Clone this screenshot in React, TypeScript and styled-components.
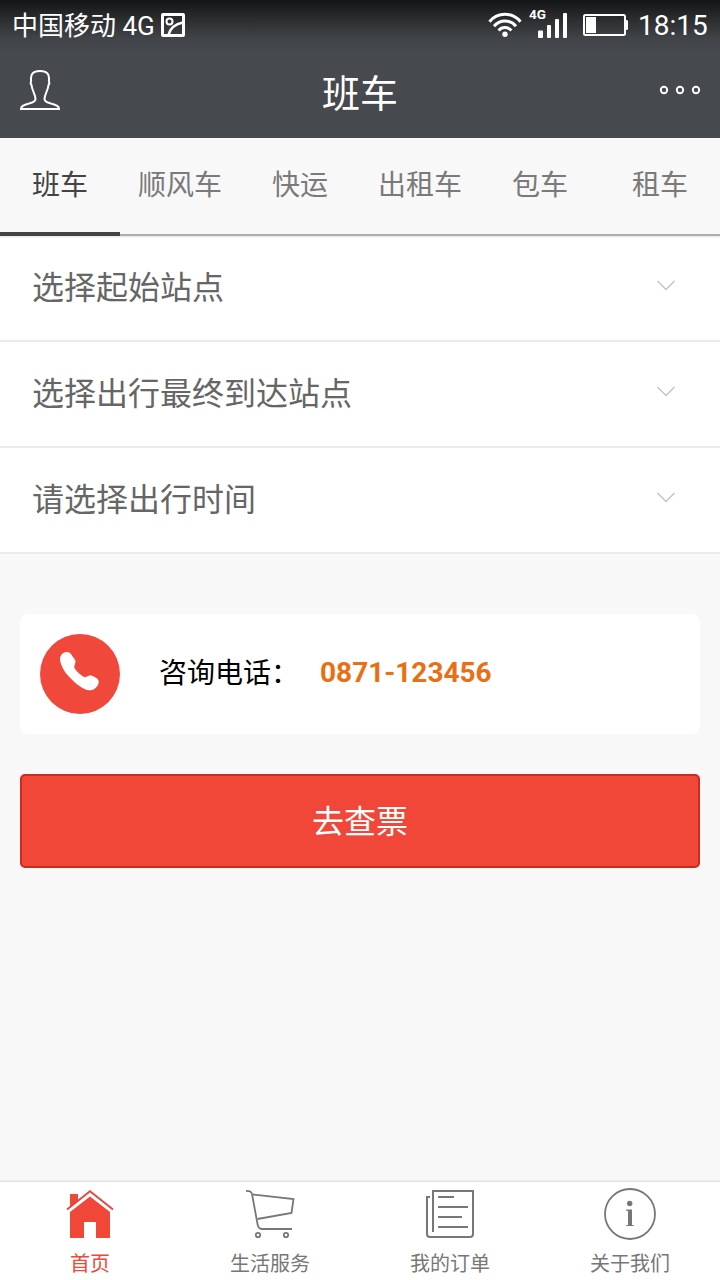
import React from 'react';
import styled, { createGlobalStyle } from 'styled-components';

const GlobalStyle = createGlobalStyle`
  * { box-sizing: border-box; }
  body { margin: 0; background: #f8f8f8; }
  button { font: inherit; }
`;

const Screen = styled.div`
  width: 720px;
  height: 1280px;
  display: flex;
  flex-direction: column;
  overflow: hidden;
  background: #f8f8f8;
  font-family: Roboto, 'Noto Sans CJK SC', sans-serif;
`;

const Header = styled.header`
  height: 138px;
  flex: none;
  color: #fff;
  background: linear-gradient(#141516 0, #2c2e30 20px, #404347 38px, #46494d 52px);
`;

const StatusBar = styled.div`
  height: 50px;
  display: flex;
  align-items: center;
  padding: 0 12px 0 12px;
`;

const Carrier = styled.span`
  font-size: 26px;
  line-height: 50px;
  padding-top: 1px;
  white-space: pre;
  margin-right: 6px;
`;

const StatusIcons = styled.div`
  margin-left: auto;
  display: flex;
  align-items: center;
`;

const SignalSlot = styled.span`
  display: flex;
  margin: 0 14px 0 7px;
`;

const Clock = styled.span`
  width: 70px;
  margin-left: 10px;
  font-size: 28px;
  line-height: 50px;
  padding-top: 2px;
  white-space: nowrap;
`;

const TitleBar = styled.div`
  height: 88px;
  display: grid;
  grid-template-columns: 80px 1fr 80px;
  align-items: center;
`;

const Title = styled.h1`
  margin: 0;
  font-size: 38px;
  line-height: 88px;
  font-weight: 400;
  text-align: center;
`;

const IconButton = styled.button`
  height: 88px;
  padding: 0;
  border: 0;
  background: none;
  color: inherit;
  display: block;
`;

const Tabs = styled.nav`
  height: 98px;
  flex: none;
  display: grid;
  grid-template-columns: repeat(6, 1fr);
  box-shadow: 0 1px 2px rgba(0, 0, 0, 0.12);
  position: relative;
`;

const Tab = styled.button<{ $active?: boolean }>`
  padding: 2px 0 ${p => (p.$active ? 0 : 2)}px;
  border: 0;
  border-bottom: ${p => (p.$active ? '4px solid #444' : '2px solid #adadad')};
  background: #f8f8f8;
  color: ${p => (p.$active ? '#444' : '#7a7a7a')};
  font-size: 28px;
  line-height: 92px;
  white-space: nowrap;
`;

const Field = styled.button`
  width: 100%;
  height: 106px;
  flex: none;
  display: flex;
  align-items: center;
  justify-content: space-between;
  padding: 0 44px 4px 32px;
  border: 0;
  border-bottom: 2px solid #ebebeb;
  background: #fff;
  color: #666;
  font-size: 32px;
  text-align: left;
`;

const FieldLabel = styled.span`
  padding-bottom: 2px;
`;

const Body = styled.main`
  flex: 1;
  display: flex;
  flex-direction: column;
  gap: 40px;
  padding: 60px 20px 0;
`;

const PhoneCard = styled.div`
  height: 120px;
  display: flex;
  align-items: center;
  padding: 0 20px;
  border-radius: 8px;
  background: #fff;
  font-size: 28px;
  color: #000;
`;

const PhoneLabel = styled.span`
  width: 161px;
  margin-left: 39px;
  white-space: nowrap;
  padding-bottom: 6px;
`;

const PhoneNumber = styled.strong`
  color: #ea6f14;
  font-weight: 700;
  padding-bottom: 3px;
`;

const SubmitButton = styled.button`
  height: 94px;
  padding: 2px 0 0;
  border: 2px solid #c92d21;
  border-radius: 5px;
  background: #f14739;
  color: #fff;
  font-size: 32px;
  line-height: 88px;
`;

const BottomNav = styled.nav`
  height: 98px;
  flex: none;
  display: grid;
  grid-template-columns: repeat(4, 1fr);
  background: #fff;
  box-shadow: 0 -1px 2px rgba(0, 0, 0, 0.14);
`;

const NavItem = styled.button<{ $active?: boolean }>`
  display: flex;
  flex-direction: column;
  align-items: center;
  padding: 4px 0 0;
  border: 0;
  background: none;
  color: ${p => (p.$active ? '#f14739' : '#777')};
`;

const NavLabel = styled.span`
  font-size: 20px;
  line-height: 30px;
  margin-top: 7px;
`;

const ImageIcon = () => (
  <svg width="24" height="24" viewBox="0 0 24 24" fill="none" stroke="#fff">
    <rect x="1.5" y="1.5" width="21" height="21" rx="0.5" strokeWidth="3" />
    <circle cx="8.5" cy="8.5" r="3" strokeWidth="2" />
    <path d="M7.5 22C9 16 14 11 22 9.5" strokeWidth="2.5" />
  </svg>
);

const WifiIcon = () => (
  <svg width="34" height="26" viewBox="0 0 34 26" fill="none" stroke="#fff" strokeWidth="3">
    <path d="M1.5 9.7A20 20 0 0 1 32.5 9.7M6 14.2A14.2 14.2 0 0 1 28 14.2M10.6 18.5A8.5 8.5 0 0 1 23.4 18.5" />
    <circle cx="17" cy="22.3" r="2.7" fill="#fff" stroke="none" />
  </svg>
);

const SignalIcon = () => (
  <svg width="40" height="38" viewBox="0 0 40 38" fill="#fff">
    <text x="0" y="13" fontFamily="Roboto, sans-serif" fontSize="13.5" fontWeight="700">4G</text>
    <rect x="9" y="24.5" width="5" height="7.5" rx="1" />
    <rect x="18" y="19" width="4" height="13" rx="1" />
    <rect x="26" y="13" width="4" height="19" rx="1" />
    <rect x="34" y="7" width="4" height="25" rx="1" />
  </svg>
);

const BatteryIcon = () => (
  <svg width="45" height="22" viewBox="0 0 45 22" fill="#fff">
    <rect x="1" y="1" width="41" height="20" rx="1.5" fill="none" stroke="#fff" strokeWidth="2" />
    <rect x="3" y="3" width="10" height="16" />
    <path d="M43 6h1.2l.8 1v8l-.8 1H43z" />
  </svg>
);

const UserIcon = () => (
  <svg width="80" height="88" viewBox="0 0 80 88" fill="none" stroke="#fff" strokeWidth="2">
    <path d="M21 59c0-3 3.5-4.5 8-5.5 4-1 6.5-2 6.5-4.5 0-5-3.5-8-4-14-1-1-1.2-2-.4-3.5C30.3 24 33 21 40 21s9.700 3 8.900 10.500c.8 1.500.6 2.500-.4 3.500-.5 6-4 9-4 14 0 2.500 2.500 3.500 6.500 4.500 4.500 1 8 2.500 8 5.500z" />
  </svg>
);

const MoreIcon = () => (
  <svg width="80" height="88" viewBox="0 0 80 88" fill="none" stroke="#fff" strokeWidth="1.9">
    <circle cx="24" cy="40" r="3.2" />
    <circle cx="40" cy="40" r="3.2" />
    <circle cx="56" cy="40" r="3.2" />
  </svg>
);

const Chevron = () => (
  <svg width="20" height="14" viewBox="0 0 20 14" fill="none" stroke="#c4c4c4" strokeWidth="1.5">
    <path d="M1.5 2 10 10.5 18.5 2" />
  </svg>
);

const PhoneIcon = () => (
  <svg width="80" height="80" viewBox="0 0 80 80">
    <circle cx="40" cy="40" r="40" fill="#f0483b" />
    <path
      fill="#fff"
      d="M20 25c0-4 3.500-7.500 7.500-7 3 .3 4 3 5.500 5 2.500 3 3 4 2 7-.6 2-1.300 3 .1 5 2 3 5.500 5.500 8 7.500 2 1.200 3 .6 5-.4 2.500-1 4-.4 7 1.200 2.500 1.300 4 2.700 3.600 5-.7 5-5 8.500-10.200 8C42 55.500 28 44 23 34.500 21.500 31.500 20 28 20 25z"
    />
  </svg>
);

const HomeIcon = () => (
  <svg width="60" height="56" viewBox="0 0 60 56" fill="#f14739">
    <path d="M30 10.5 50 26v26H36V36H24v16H10V26z" />
    <path d="M7 24 30 5.2 53 24" fill="none" stroke="#fff" strokeWidth="5" />
    <path d="M10 8h8v7l-8 6.5z" />
    <path d="M7 23.5 30 5.2 53 23.5" fill="none" stroke="#e6483b" strokeWidth="1.9" />
  </svg>
);

const CartIcon = () => (
  <svg width="60" height="56" viewBox="0 0 60 56" fill="none" stroke="#777" strokeWidth="1.8">
    <path d="M6 4.800c4 0 5.500.5 6.200 4.200L17.500 38c.7 4 1.800 5 5 5H52" />
    <path d="M13 8.500 53.500 13 51.500 27 17.500 33" />
    <circle cx="18" cy="49" r="2.2" />
    <circle cx="46" cy="49" r="2.2" />
  </svg>
);

const OrderIcon = () => (
  <svg width="60" height="56" viewBox="0 0 60 56" fill="none" stroke="#777" strokeWidth="2">
    <path d="M13 46V5h40v43q0 3-3 3H10q-3 0-3-3V11h3" />
    <path d="M18 11h16M18 21h30M18 31h24M18 41h30" />
  </svg>
);

const InfoIcon = () => (
  <svg width="60" height="56" viewBox="0 0 60 56" fill="#777">
    <circle cx="30" cy="28" r="25" fill="none" stroke="#777" strokeWidth="1.8" />
    <circle cx="29.7" cy="17.5" r="2.7" />
    <path d="M26 23.500h6V39l2 .3V40h-8v-.7l2-.3V25l-2-.5z" />
  </svg>
);

const tabs = ['班车', '顺风车', '快运', '出租车', '包车', '租车'];
const fields = ['选择起始站点', '选择出行最终到达站点', '请选择出行时间'];
const navItems = [
  { label: '首页', Icon: HomeIcon },
  { label: '生活服务', Icon: CartIcon },
  { label: '我的订单', Icon: OrderIcon },
  { label: '关于我们', Icon: InfoIcon },
];

export default function App() {
  return (
    <Screen>
      <GlobalStyle />
      <Header>
        <StatusBar>
          <Carrier>中国移动 4G</Carrier>
          <ImageIcon />
          <StatusIcons>
            <WifiIcon />
            <SignalSlot><SignalIcon /></SignalSlot>
            <BatteryIcon />
            <Clock>18:15</Clock>
          </StatusIcons>
        </StatusBar>
        <TitleBar>
          <IconButton aria-label="个人中心"><UserIcon /></IconButton>
          <Title>班车</Title>
          <IconButton aria-label="更多"><MoreIcon /></IconButton>
        </TitleBar>
      </Header>
      <Tabs>
        {tabs.map((label, i) => (
          <Tab key={label} $active={i === 0}>{label}</Tab>
        ))}
      </Tabs>
      {fields.map(label => (
        <Field key={label}>
          <FieldLabel>{label}</FieldLabel>
          <Chevron />
        </Field>
      ))}
      <Body>
        <PhoneCard>
          <PhoneIcon />
          <PhoneLabel>咨询电话：</PhoneLabel>
          <PhoneNumber>0871-123456</PhoneNumber>
        </PhoneCard>
        <SubmitButton>去查票</SubmitButton>
      </Body>
      <BottomNav>
        {navItems.map(({ label, Icon }, i) => (
          <NavItem key={label} $active={i === 0}>
            <Icon />
            <NavLabel>{label}</NavLabel>
          </NavItem>
        ))}
      </BottomNav>
    </Screen>
  );
}
